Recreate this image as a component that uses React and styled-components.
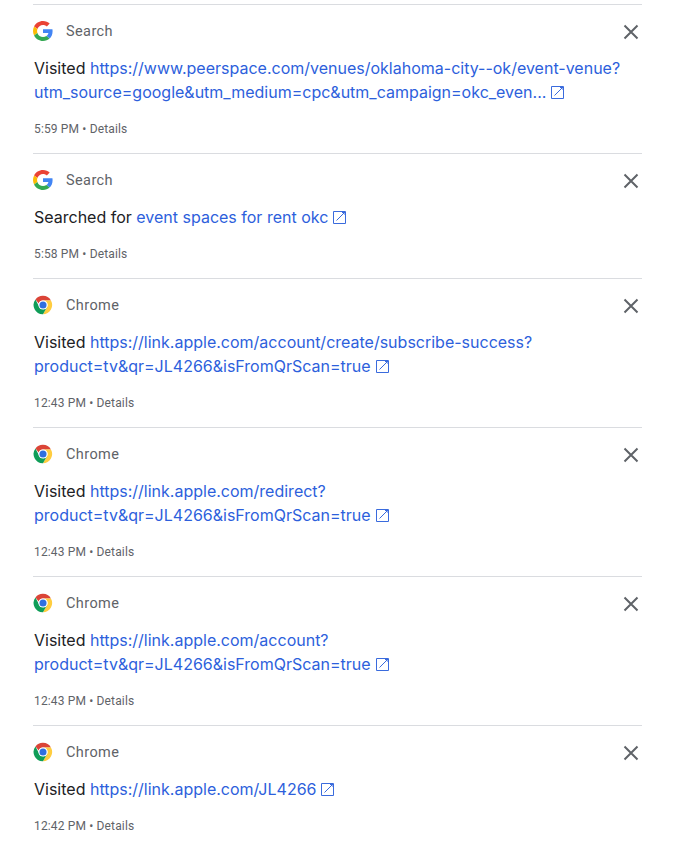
import React from 'react'
import styled, { createGlobalStyle } from 'styled-components'

const Global = createGlobalStyle`
  html, body { margin: 0; background: #fff; }
  body { font-family: Inter, Roboto, sans-serif; }
`

const List = styled.div`
  width: 609px;
  margin-left: 33px;
  padding-top: 4px;
`
const Item = styled.div`
  border-top: 1px solid #dadce0;
  padding: 14px 0 16px;
`
const Header = styled.div`
  display: flex;
  align-items: center;
  height: 24px;
`
const Source = styled.span`
  margin-left: 13px;
  font-family: Roboto, sans-serif;
  font-size: 14.5px;
  letter-spacing: 0.4px;
  color: #5f6368;
`
const Close = styled.button`
  margin: 2px 3px 0 auto;
  padding: 0;
  border: 0;
  background: none;
  display: flex;
  color: #5f6368;
`
const Body = styled.div`
  margin-top: 13px;
  padding-left: 1px;
  font-size: 16px;
  line-height: 24px;
  color: #202124;
  white-space: nowrap;
`
const Line = styled.div``
const Link = styled.a`
  color: #2d5fdc;
  text-decoration: none;
`
const Arrow = styled.svg`
  width: 13px;
  height: 13px;
  margin-left: 5px;
  vertical-align: -1px;
  color: #3a6bdd;
`
const Footer = styled.div`
  margin-top: 17px;
  padding-left: 1px;
  font-family: Roboto, sans-serif;
  font-size: 12px;
  line-height: 16px;
  letter-spacing: 0.15px;
  color: #5f6368;
`

const GoogleIcon = () => (
  <svg width="20" height="20" viewBox="0 0 48 48">
    <path fill="#EA4335" d="M24 9.500c3.500 0 6.700 1.200 9.200 3.600l6.900-6.900C35.900 2.400 30.500 0 24 0 14.600 0 6.500 5.400 2.600 13.200l8 6.200C12.500 13.700 17.800 9.500 24 9.500z" />
    <path fill="#4285F4" d="M47 24.500c0-1.600-.1-3.100-.4-4.500H24v9h12.900c-.6 3-2.200 5.500-4.800 7.200l7.700 6C44.300 38 47 31.800 47 24.500z" />
    <path fill="#FBBC05" d="M10.600 28.600c-.5-1.400-.8-3-.8-4.600s.3-3.200.8-4.600l-8-6.200C.9 16.500 0 20.100 0 24s.9 7.500 2.600 10.800l8-6.200z" />
    <path fill="#34A853" d="M24 48c6.500 0 11.900-2.100 15.800-5.800l-7.700-6c-2.100 1.400-4.900 2.300-8.100 2.300-6.200 0-11.500-4.200-13.400-9.900l-8 6.200C6.500 42.600 14.600 48 24 48z" />
  </svg>
)

const ChromeIcon = () => (
  <svg width="20" height="20" viewBox="0 0 48 48">
    <path fill="#DB4437" d="M24 2a22 22 0 0 1 19.050 11H24a11 11 0 0 0-10.300 7.200L5.900 10.700A22 22 0 0 1 24 2z" />
    <path fill="#FFCD40" d="M43.050 13A22 22 0 0 1 24 46l9.500-16.500A11 11 0 0 0 33.500 18.500 11 11 0 0 0 24 13z" />
    <path fill="#0F9D58" d="M5.900 10.700l9.600 18.800A11 11 0 0 0 33.500 29.500L24 46A22 22 0 0 1 5.900 10.700z" />
    <circle cx="24" cy="24" r="11" fill="#fff" />
    <circle cx="24" cy="24" r="8.500" fill="#2f6fe0" />
  </svg>
)

const CloseIcon = () => (
  <svg width="16" height="16" viewBox="0 0 16 16">
    <path d="M1.500 1.500l13 13M14.500 1.500l-13 13" stroke="currentColor" strokeWidth="2" fill="none" />
  </svg>
)

// square box with a plain diagonal up to the top right corner
const OpenIcon = () => (
  <Arrow viewBox="0 0 13 13">
    <path d="M.5.500h12v12H.5zM3.500 9.500L12 1M9 1.500h3V4" stroke="currentColor" strokeWidth="1" fill="none" />
  </Arrow>
)

const items = [
  { app: 'Search', verb: 'Visited', lines: ['https://www.peerspace.com/venues/oklahoma-city--ok/event-venue?', 'utm_source=google&utm_medium=cpc&utm_campaign=okc_even...'], time: '5:59 PM' },
  { app: 'Search', verb: 'Searched for', lines: ['event spaces for rent okc'], time: '5:58 PM' },
  { app: 'Chrome', verb: 'Visited', lines: ['https://link.apple.com/account/create/subscribe-success?', 'product=tv&qr=JL4266&isFromQrScan=true'], time: '12:43 PM' },
  { app: 'Chrome', verb: 'Visited', lines: ['https://link.apple.com/redirect?', 'product=tv&qr=JL4266&isFromQrScan=true'], time: '12:43 PM' },
  { app: 'Chrome', verb: 'Visited', lines: ['https://link.apple.com/account?', 'product=tv&qr=JL4266&isFromQrScan=true'], time: '12:43 PM' },
  { app: 'Chrome', verb: 'Visited', lines: ['https://link.apple.com/JL4266'], time: '12:42 PM' },
]

export default function App() {
  return (
    <List>
      <Global />
      {items.map((item, i) => (
        <Item key={i}>
          <Header>
            {item.app === 'Search' ? <GoogleIcon /> : <ChromeIcon />}
            <Source>{item.app}</Source>
            <Close><CloseIcon /></Close>
          </Header>
          <Body>
            {item.lines.map((text, n) => (
              <Line key={n}>
                {n === 0 && `${item.verb} `}
                <Link>{text}</Link>
                {n === item.lines.length - 1 && <OpenIcon />}
              </Line>
            ))}
          </Body>
          <Footer>{item.time} • Details</Footer>
        </Item>
      ))}
    </List>
  )
}
